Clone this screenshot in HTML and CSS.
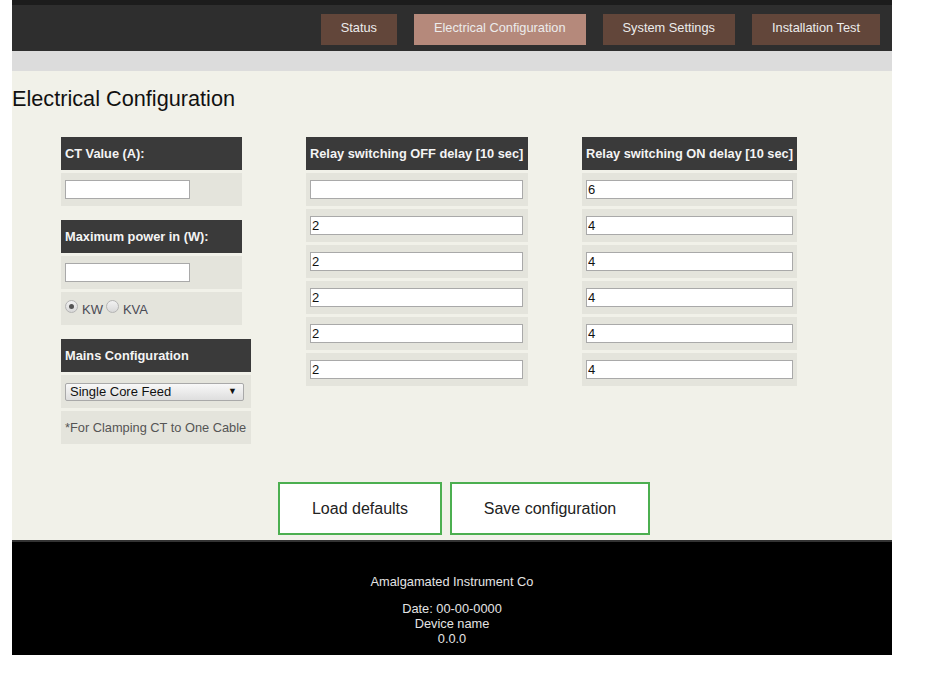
FILE: index.html
```html
<!DOCTYPE html>
<html>
<head>
<meta charset="utf-8">
<title>Electrical Configuration</title>
<link rel="stylesheet" href="styles.css">
</head>
<body>
<div class="page">
  <div class="topstrip"></div>
  <nav class="nav">
    <a class="tab">Status</a>
    <a class="tab active">Electrical Configuration</a>
    <a class="tab">System Settings</a>
    <a class="tab">Installation Test</a>
  </nav>
  <div class="band"></div>
  <main class="content">
    <h1 class="title">Electrical Configuration</h1>
    <div class="columns">
      <div class="col col-left">
        <div class="group g-narrow">
          <div class="head">CT Value (A):</div>
          <div class="row"><input class="field f-small" type="text"></div>
        </div>
        <div class="group g-narrow">
          <div class="head">Maximum power in (W):</div>
          <div class="row"><input class="field f-small" type="text"></div>
          <div class="row radios">
            <span class="radio checked"></span><span class="rlabel">KW</span>
            <span class="radio"></span><span class="rlabel">KVA</span>
          </div>
        </div>
        <div class="group g-wide">
          <div class="head">Mains Configuration</div>
          <div class="row">
            <div class="selectwrap">
              <select class="select"><option>Single Core Feed</option></select>
            </div>
          </div>
          <div class="row note">*For Clamping CT to One Cable</div>
        </div>
      </div>
      <div class="col col-mid">
        <div class="group">
          <div class="head">Relay switching OFF delay [10 sec]</div>
          <div class="row"><input class="field f-mid" type="text" value=""></div>
          <div class="row"><input class="field f-mid" type="text" value="2"></div>
          <div class="row"><input class="field f-mid" type="text" value="2"></div>
          <div class="row"><input class="field f-mid" type="text" value="2"></div>
          <div class="row"><input class="field f-mid" type="text" value="2"></div>
          <div class="row"><input class="field f-mid" type="text" value="2"></div>
        </div>
      </div>
      <div class="col col-right">
        <div class="group">
          <div class="head">Relay switching ON delay [10 sec]</div>
          <div class="row"><input class="field f-right" type="text" value="6"></div>
          <div class="row"><input class="field f-right" type="text" value="4"></div>
          <div class="row"><input class="field f-right" type="text" value="4"></div>
          <div class="row"><input class="field f-right" type="text" value="4"></div>
          <div class="row"><input class="field f-right" type="text" value="4"></div>
          <div class="row"><input class="field f-right" type="text" value="4"></div>
        </div>
      </div>
    </div>
    <div class="actions">
      <button class="btn btn-load">Load defaults</button>
      <button class="btn btn-save">Save configuration</button>
    </div>
  </main>
  <footer class="footer">
    <div class="fline">Amalgamated Instrument Co</div>
    <div class="fgap"></div>
    <div class="fline">Date: 00-00-0000</div>
    <div class="fline">Device name</div>
    <div class="fline">0.0.0</div>
  </footer>
</div>
</body>
</html>
```

FILE: styles.css
```css
html, body {
  margin: 0;
  padding: 0;
  background: #ffffff;
}
body {
  font-family: "Liberation Sans", Arial, sans-serif;
  font-size: 12.8px;
}
.page {
  margin-left: 12px;
  width: 880px;
}
.topstrip {
  height: 5px;
  background: #1c1c1c;
}
.nav {
  height: 46px;
  background: #2e2e2e;
  display: flex;
  justify-content: flex-end;
  align-items: flex-start;
  gap: 17px;
  padding: 9px 12px 0 0;
  box-sizing: border-box;
}
.tab {
  height: 31px;
  line-height: 27px;
  padding: 0 20px;
  background: #62463a;
  color: #ececec;
  font-size: 12.8px;
  white-space: nowrap;
}
.tab.active {
  background: #b5897b;
}
.band {
  height: 20px;
  background: #dcdcdc;
}
.content {
  background: #f1f1e9;
  overflow: hidden;
}
.title {
  margin: 15px 0 26px 0;
  font-size: 21.7px;
  line-height: 25px;
  font-weight: normal;
  color: #111;
}
.columns {
  display: flex;
  align-items: flex-start;
  padding-left: 49px;
}
.col {
  display: flex;
  flex-direction: column;
  gap: 14px;
}
.col-left { width: 190px; }
.col-mid { width: 222px; margin-left: 55px; }
.col-right { width: 215px; margin-left: 54px; }
.group {
  display: flex;
  flex-direction: column;
  gap: 3px;
}
.g-narrow { width: 181px; }
.g-wide { width: 190px; }
.head {
  height: 33px;
  line-height: 33px;
  background: #3a3a3a;
  color: #f4f4f4;
  font-weight: bold;
  font-size: 12.8px;
  padding-left: 4px;
  white-space: nowrap;
  overflow: hidden;
}
.row {
  height: 33px;
  background: #e4e4dc;
  display: flex;
  align-items: center;
  padding-left: 4px;
}
.field {
  box-sizing: border-box;
  height: 19px;
  border: 1px solid #a9a9a9;
  background: #fff;
  padding: 0 1px;
  margin: 0;
  font-family: "Liberation Sans", Arial, sans-serif;
  font-size: 13px;
  color: #111;
  outline: none;
}
.f-small { width: 125px; }
.f-mid { width: 213px; }
.f-right { width: 207px; }
.radios {
  color: #4a4a55;
}
.radio {
  box-sizing: border-box;
  width: 13px;
  height: 13px;
  border-radius: 50%;
  border: 1px solid #b4b4b4;
  background: linear-gradient(#f2f2f2, #d8d8d8);
  margin: -4px 4px 0 0;
  position: relative;
}
.radio.checked::after {
  content: "";
  position: absolute;
  left: 3px;
  top: 3px;
  width: 5px;
  height: 5px;
  border-radius: 50%;
  background: #555;
}
.rlabel {
  margin-right: 3px;
  font-size: 13px;
  padding-top: 1px;
}
.selectwrap {
  position: relative;
  width: 179px;
  height: 18px;
}
.select {
  -webkit-appearance: none;
  appearance: none;
  box-sizing: border-box;
  width: 179px;
  height: 18px;
  border: 1px solid #a9a9a9;
  border-radius: 2px;
  background: linear-gradient(#f8f8f8, #dedede);
  padding: 0 0 0 4px;
  margin: 0;
  font-family: "Liberation Sans", Arial, sans-serif;
  font-size: 13px;
  color: #111;
}
.selectwrap::after {
  content: "\25BC";
  position: absolute;
  right: 7px;
  top: 3px;
  font-size: 9px;
  color: #111;
  pointer-events: none;
}
.note {
  color: #555;
  font-size: 12.8px;
  white-space: nowrap;
}
.actions {
  display: flex;
  gap: 8px;
  padding: 38px 0 5px 266px;
}
.btn {
  box-sizing: border-box;
  height: 53px;
  border: 2px solid #4caf50;
  background: #fff;
  color: #222;
  font-family: "Liberation Sans", Arial, sans-serif;
  font-size: 16px;
  padding: 0;
  margin: 0;
}
.btn-load { width: 164px; }
.btn-save { width: 200px; }
.footer {
  background: #000;
  border-top: 2px solid #333;
  height: 115px;
  box-sizing: border-box;
  padding-top: 32px;
  text-align: center;
  color: #e4e4e4;
  font-size: 12.8px;
}
.fline {
  line-height: 15px;
}
.fgap {
  height: 12px;
}
```
